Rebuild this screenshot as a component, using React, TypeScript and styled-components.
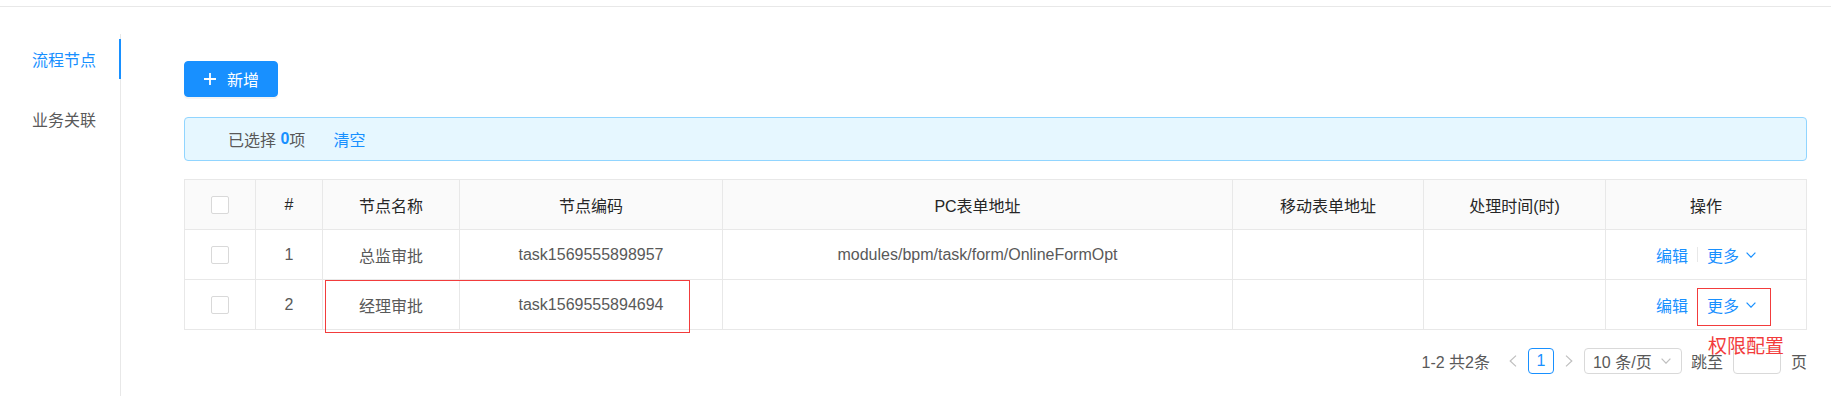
import React from 'react';
import styled, { createGlobalStyle } from 'styled-components';

const GlobalStyle = createGlobalStyle`
  html, body { margin: 0; padding: 0; background: #fff; }
  body {
    font-family: "Liberation Sans", "Noto Sans CJK SC", sans-serif;
    font-size: 16px;
    color: #595959;
  }
  * { box-sizing: border-box; }
`;

const Page = styled.div`
  position: relative;
  width: 1831px;
  height: 396px;
  overflow: hidden;
`;

const TopBar = styled.div`
  height: 7px;
  border-bottom: 1px solid #e8e8e8;
`;

const Body = styled.div`
  display: flex;
  padding-top: 27px;
`;

const SideNav = styled.nav`
  width: 121px;
  min-height: 362px;
  border-right: 1px solid #e8e8e8;
  padding-top: 5px;
  flex-shrink: 0;
`;

const Tab = styled.div<{ $active?: boolean }>`
  position: relative;
  height: 40px;
  margin-bottom: 20px;
  padding: 0 24px 0 32px;
  display: flex;
  align-items: center;
  white-space: nowrap;
  color: ${(p) => (p.$active ? '#1890ff' : '#595959')};
`;

const InkBar = styled.span`
  position: absolute;
  right: -1px;
  top: 0;
  width: 2px;
  height: 40px;
  background: #1890ff;
`;

const Content = styled.main`
  margin-left: 63px;
  width: 1623px;
  padding-top: 27px;
`;

const PrimaryButton = styled.button`
  height: 36px;
  padding: 0 18px 0 17px;
  border: 1px solid #1890ff;
  border-radius: 4px;
  background: #1890ff;
  color: #fff;
  font-family: inherit;
  font-size: 16px;
  display: inline-flex;
  align-items: center;
  gap: 9px;
  box-shadow: 0 2px 0 rgba(0, 0, 0, 0.045);
  cursor: pointer;
`;

const Alert = styled.div`
  margin-top: 20px;
  height: 44px;
  border: 1px solid #91d5ff;
  border-radius: 4px;
  background: #e6f7ff;
  padding-left: 43px;
  display: flex;
  align-items: center;
  white-space: pre;
`;

const Count = styled.span`
  color: #1890ff;
  font-weight: 600;
`;

const Link = styled.a<{ $gap?: number }>`
  color: #1890ff;
  cursor: pointer;
  margin-left: ${(p) => p.$gap ?? 0}px;
  display: inline-flex;
  align-items: center;
`;

const Table = styled.div`
  margin-top: 18px;
  border-top: 1px solid #e8e8e8;
  border-left: 1px solid #e8e8e8;
`;

const COLS = '71px 67px 137px 263px 510px 191px 182px 201px';

const Row = styled.div<{ $head?: boolean }>`
  display: grid;
  grid-template-columns: ${COLS};
  background: ${(p) => (p.$head ? '#fafafa' : '#fff')};
  color: ${(p) => (p.$head ? '#262626' : '#595959')};
`;

const Cell = styled.div`
  height: 50px;
  border-right: 1px solid #e8e8e8;
  border-bottom: 1px solid #e8e8e8;
  display: flex;
  align-items: center;
  justify-content: center;
  white-space: nowrap;
`;

const Checkbox = styled.span`
  width: 18px;
  height: 18px;
  border: 1px solid #d9d9d9;
  border-radius: 2px;
  background: #fff;
  display: inline-block;
`;

const VDivider = styled.span`
  width: 1px;
  height: 15px;
  background: #e8e8e8;
  margin: 0 9px;
`;

const Chevron = styled.svg<{ $color?: string }>`
  margin-left: 7px;
  color: ${(p) => p.$color ?? '#1890ff'};
`;

const Pagination = styled.div`
  margin-top: 18px;
  height: 26px;
  display: flex;
  justify-content: flex-end;
  align-items: center;
`;

const TotalText = styled.span`
  margin-right: 8px;
`;

const PagerBox = styled.span<{ $active?: boolean }>`
  width: 26px;
  height: 26px;
  margin-left: 2px;
  border: 1px solid ${(p) => (p.$active ? '#1890ff' : 'transparent')};
  border-radius: 4px;
  color: ${(p) => (p.$active ? '#1890ff' : '#bfbfbf')};
  display: inline-flex;
  align-items: center;
  justify-content: center;
`;

const SizeSelect = styled.span`
  margin-left: 2px;
  width: 98px;
  height: 26px;
  border: 1px solid #d9d9d9;
  border-radius: 4px;
  padding: 0 10px 0 8px;
  display: inline-flex;
  align-items: center;
  justify-content: space-between;
  white-space: pre;
`;

const Jumper = styled.span`
  margin-left: 9px;
  display: inline-flex;
  align-items: center;
  gap: 10px;
`;

const JumpInput = styled.span`
  width: 48px;
  height: 26px;
  border: 1px solid #d9d9d9;
  border-radius: 4px;
  background: #fff;
`;

const Annotation = styled.div<{ $x: number; $y: number; $w: number; $h: number }>`
  position: absolute;
  left: ${(p) => p.$x}px;
  top: ${(p) => p.$y}px;
  width: ${(p) => p.$w}px;
  height: ${(p) => p.$h}px;
  border: 1px solid #f23c3c;
  pointer-events: none;
`;

const AnnotationLabel = styled.div`
  position: absolute;
  left: 1708px;
  top: 335px;
  font-family: "Noto Sans CJK SC", sans-serif;
  font-size: 19px;
  line-height: 1;
  color: #f23c3c;
  white-space: nowrap;
`;

const DownIcon = ({ color }: { color?: string }) => (
  <Chevron $color={color} width="10" height="6" viewBox="0 0 10 6">
    <path d="M0.6 0.6 L5 5.2 L9.4 0.6" fill="none" stroke="currentColor" strokeWidth="1.2" />
  </Chevron>
);

const Arrow = ({ dir }: { dir: 'left' | 'right' }) => (
  <svg width="8" height="12" viewBox="0 0 8 12">
    <path
      d={dir === 'left' ? 'M7 0.6 L1.2 6 L7 11.4' : 'M1 0.6 L6.8 6 L1 11.4'}
      fill="none"
      stroke="#bfbfbf"
      strokeWidth="1.2"
    />
  </svg>
);

const PlusIcon = () => (
  <svg width="16" height="16" viewBox="0 0 16 16">
    <path d="M8 2 V14 M2 8 H14" stroke="#fff" strokeWidth="1.8" fill="none" />
  </svg>
);

const headers = ['#', '节点名称', '节点编码', 'PC表单地址', '移动表单地址', '处理时间(时)', '操作'];

const rows = [
  { no: '1', name: '总监审批', code: 'task1569555898957', pc: 'modules/bpm/task/form/OnlineFormOpt' },
  { no: '2', name: '经理审批', code: 'task1569555894694', pc: '' },
];

export default function App() {
  return (
    <Page>
      <GlobalStyle />
      <TopBar />
      <Body>
        <SideNav>
          <Tab $active>
            流程节点
            <InkBar />
          </Tab>
          <Tab>业务关联</Tab>
        </SideNav>
        <Content>
          <PrimaryButton>
            <PlusIcon />
            新增
          </PrimaryButton>
          <Alert>
            已选择 <Count>0</Count>项<Link $gap={28}>清空</Link>
          </Alert>
          <Table>
            <Row $head>
              <Cell>
                <Checkbox />
              </Cell>
              {headers.map((h) => (
                <Cell key={h}>{h}</Cell>
              ))}
            </Row>
            {rows.map((r) => (
              <Row key={r.no}>
                <Cell>
                  <Checkbox />
                </Cell>
                <Cell>{r.no}</Cell>
                <Cell>{r.name}</Cell>
                <Cell>{r.code}</Cell>
                <Cell>{r.pc}</Cell>
                <Cell />
                <Cell />
                <Cell>
                  <Link>编辑</Link>
                  <VDivider />
                  <Link>
                    更多
                    <DownIcon />
                  </Link>
                </Cell>
              </Row>
            ))}
          </Table>
          <Pagination>
            <TotalText>1-2 共2条</TotalText>
            <PagerBox>
              <Arrow dir="left" />
            </PagerBox>
            <PagerBox $active>1</PagerBox>
            <PagerBox>
              <Arrow dir="right" />
            </PagerBox>
            <SizeSelect>
              10 条/页
              <DownIcon color="#bfbfbf" />
            </SizeSelect>
            <Jumper>
              跳至
              <JumpInput />
              页
            </Jumper>
          </Pagination>
        </Content>
      </Body>
      <Annotation $x={325} $y={280} $w={365} $h={53} />
      <Annotation $x={1697} $y={288} $w={74} $h={38} />
      <AnnotationLabel>权限配置</AnnotationLabel>
    </Page>
  );
}
